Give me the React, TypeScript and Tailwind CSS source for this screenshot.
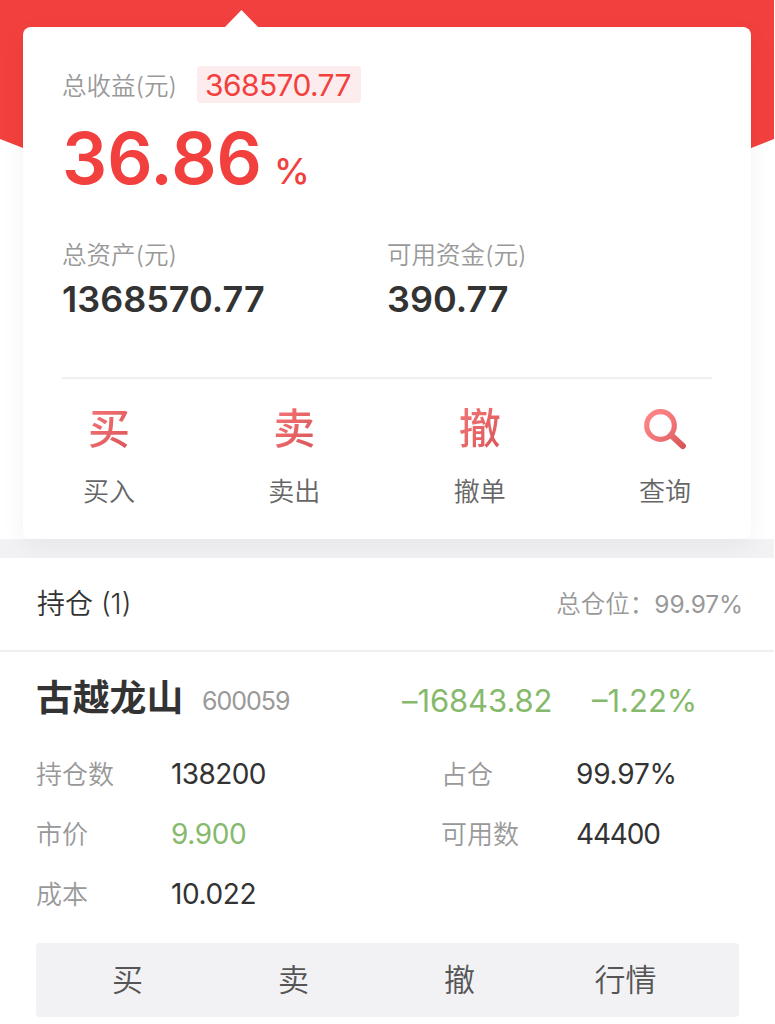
import type { ReactNode } from "react";

const actions: ReadonlyArray<{ glyph: string; label: string }> = [
  { glyph: "买", label: "买入" },
  { glyph: "卖", label: "卖出" },
  { glyph: "撤", label: "撤单" },
  { glyph: "", label: "查询" },
];

const details: ReadonlyArray<{ label: string; value: string; className: string }> = [
  { label: "持仓数", value: "138200", className: "tracking-[-0.6px] text-[#333]" },
  { label: "占仓", value: "99.97%", className: "tracking-[-0.2px] text-[#333]" },
  { label: "市价", value: "9.900", className: "tracking-[-0.4px] text-[#85b96c]" },
  { label: "可用数", value: "44400", className: "tracking-[-1.2px] text-[#333]" },
  { label: "成本", value: "10.022", className: "tracking-[-0.4px] text-[#333]" },
];

const shortcuts = ["买", "卖", "撤", "行情"];

function SearchIcon() {
  return (
    <svg width="44" height="44" viewBox="0 0 44 44" fill="none">
      <defs>
        <linearGradient id="search" x1="4" y1="6" x2="40" y2="42" gradientUnits="userSpaceOnUse">
          <stop stopColor="#ff8587" />
          <stop offset="0.5" stopColor="#f07476" />
          <stop offset="1" stopColor="#d65355" />
        </linearGradient>
      </defs>
      <circle cx="17.5" cy="18.5" r="13.8" stroke="url(#search)" strokeWidth="5.2" />
      <path d="M28.5 28.5L39.8 39" stroke="url(#search)" strokeWidth="6.2" strokeLinecap="round" />
    </svg>
  );
}

function Balance({ label, children }: { label: string; children: ReactNode }) {
  return (
    <div className="w-[326px]">
      <div className="h-9 pt-px text-[24.5px] leading-9 font-[350] text-[#999]">{label}</div>
      <div className="mt-[5px] h-11 text-[36px] leading-[44px] font-semibold text-[#333]">{children}</div>
    </div>
  );
}

export default function App() {
  return (
    <div className="h-[1024px] w-[774px] overflow-hidden bg-white font-['Inter','Noto_Sans_CJK_SC',sans-serif] whitespace-nowrap">
      <div className="relative h-[558px] overflow-hidden px-[23px] pt-[27px]">
        {/* Red header and gray divider behind the card */}
        <div className="absolute inset-x-0 top-0 h-[290px] bg-[#f2403e] [clip-path:polygon(0_0,100%_0,100%_139px,50%_290px,0_139px)]" />
        <div className="absolute inset-x-0 bottom-0 h-[19px] bg-[#f2f2f5]" />

        <div className="relative h-[512px] w-[728px] rounded-lg bg-white px-[39px] pt-[39px] shadow-[0_8px_26px_rgba(0,0,0,0.05)]">
          <div className="absolute -top-[17px] left-[201px] h-[18px] w-[35px] bg-white [clip-path:polygon(50%_0,100%_100%,0_100%)]" />

          <div className="flex h-[37px] items-center">
            <span className="w-[135px] pt-[3px] text-[24.5px] font-[350] text-[#999]">总收益(元)</span>
            <span className="flex h-[37px] w-[164px] items-center rounded bg-[#fdeced] pl-2 text-[30px] leading-[37px] tracking-[-0.6px] text-[#f2403e]">
              <span className="pt-px">368570.77</span>
            </span>
          </div>

          <div className="mt-[15px] flex h-20 text-[#f2403e]">
            <span className="text-[71px] leading-[80px] font-semibold">36.86</span>
            <span className="ml-3 pt-[33px] text-[36px] leading-[40px] font-medium">%</span>
          </div>

          <div className="mt-[38px] flex">
            <Balance label="总资产(元)">1368570.77</Balance>
            <Balance label="可用资金(元)">390.77</Balance>
          </div>

          <div className="mt-[56px] h-[1.5px] w-[650px] bg-[#f0f0f0]" />

          <div className="mt-[25.5px] flex justify-between px-[21px]">
            {actions.map((action) => (
              <div key={action.label} className="flex w-[52px] flex-col items-center">
                <div className="flex h-[50px] items-center justify-center">
                  {action.glyph ? (
                    <span className="bg-linear-to-br from-[#f57678] to-[#d95456] bg-clip-text text-[42px] leading-[50px] font-medium text-transparent">
                      {action.glyph}
                    </span>
                  ) : (
                    <SearchIcon />
                  )}
                </div>
                <span className="mt-[20px] text-[26px] leading-9 font-[350] text-[#666]">{action.label}</span>
              </div>
            ))}
          </div>
        </div>
      </div>

      <div className="flex h-[92px] items-center justify-between pl-[37px]">
        <span className="text-[28px] font-[350] text-[#333]">持仓 (1)</span>
        <span className="mr-[31px] pt-px text-[24.5px] font-[350] text-[#999]">
          总仓位：<span className="font-normal tracking-[-0.1px]">99.97%</span>
        </span>
      </div>
      <div className="h-[1.5px] bg-[#f0f0f0]" />

      <div className="flex h-[92px] pl-9">
        <span className="w-[166px] text-[36.8px] leading-[91px] font-bold text-[#333]">古越龙山</span>
        <span className="w-[200px] text-[25px] leading-[99px] tracking-[-1px] text-[#999]">600059</span>
        <span className="w-[190px] text-[31px] leading-[97px] tracking-[-0.1px] text-[#85b96c]">–16843.82</span>
        <span className="text-[31px] leading-[97px] text-[#85b96c]">–1.22%</span>
      </div>

      <div className="grid grid-cols-[405px_1fr] pt-px pl-9">
        {details.map((item) => (
          <div key={item.label} className="flex h-[59.7px] items-center">
            <span className="w-[135px] pt-px text-[26px] font-[350] text-[#999]">{item.label}</span>
            <span className={`text-[28px] ${item.className}`}>{item.value}</span>
          </div>
        ))}
      </div>

      <div className="mt-[19px] ml-[35.5px] grid h-[74px] w-[703px] grid-cols-4 items-center rounded bg-[#f2f2f5] pt-[2px] pr-[30px] pl-[9px]">
        {shortcuts.map((name) => (
          <span key={name} className="text-center text-[31px] font-[350] text-[#555]">
            {name}
          </span>
        ))}
      </div>
    </div>
  );
}
